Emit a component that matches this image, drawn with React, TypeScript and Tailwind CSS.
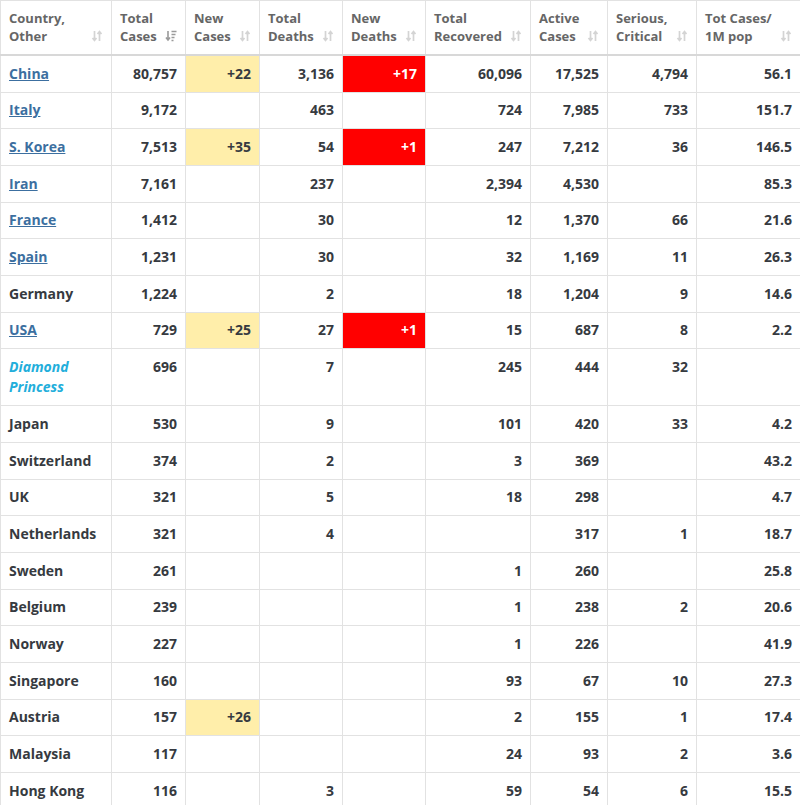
import React from "react";

type Row = {
  name: string;
  kind?: "link" | "ship";
  total: string;
  newCases?: string;
  deaths?: string;
  newDeaths?: string;
  recovered?: string;
  active: string;
  serious?: string;
  perMillion?: string;
};

const rows: Row[] = [
  { name: "China", kind: "link", total: "80,757", newCases: "+22", deaths: "3,136", newDeaths: "+17", recovered: "60,096", active: "17,525", serious: "4,794", perMillion: "56.1" },
  { name: "Italy", kind: "link", total: "9,172", deaths: "463", recovered: "724", active: "7,985", serious: "733", perMillion: "151.7" },
  { name: "S. Korea", kind: "link", total: "7,513", newCases: "+35", deaths: "54", newDeaths: "+1", recovered: "247", active: "7,212", serious: "36", perMillion: "146.5" },
  { name: "Iran", kind: "link", total: "7,161", deaths: "237", recovered: "2,394", active: "4,530", perMillion: "85.3" },
  { name: "France", kind: "link", total: "1,412", deaths: "30", recovered: "12", active: "1,370", serious: "66", perMillion: "21.6" },
  { name: "Spain", kind: "link", total: "1,231", deaths: "30", recovered: "32", active: "1,169", serious: "11", perMillion: "26.3" },
  { name: "Germany", total: "1,224", deaths: "2", recovered: "18", active: "1,204", serious: "9", perMillion: "14.6" },
  { name: "USA", kind: "link", total: "729", newCases: "+25", deaths: "27", newDeaths: "+1", recovered: "15", active: "687", serious: "8", perMillion: "2.2" },
  { name: "Diamond Princess", kind: "ship", total: "696", deaths: "7", recovered: "245", active: "444", serious: "32" },
  { name: "Japan", total: "530", deaths: "9", recovered: "101", active: "420", serious: "33", perMillion: "4.2" },
  { name: "Switzerland", total: "374", deaths: "2", recovered: "3", active: "369", perMillion: "43.2" },
  { name: "UK", total: "321", deaths: "5", recovered: "18", active: "298", perMillion: "4.7" },
  { name: "Netherlands", total: "321", deaths: "4", active: "317", serious: "1", perMillion: "18.7" },
  { name: "Sweden", total: "261", recovered: "1", active: "260", perMillion: "25.8" },
  { name: "Belgium", total: "239", recovered: "1", active: "238", serious: "2", perMillion: "20.6" },
  { name: "Norway", total: "227", recovered: "1", active: "226", perMillion: "41.9" },
  { name: "Singapore", total: "160", recovered: "93", active: "67", serious: "10", perMillion: "27.3" },
  { name: "Austria", total: "157", newCases: "+26", recovered: "2", active: "155", serious: "1", perMillion: "17.4" },
  { name: "Malaysia", total: "117", recovered: "24", active: "93", serious: "2", perMillion: "3.6" },
  { name: "Hong Kong", total: "116", deaths: "3", recovered: "59", active: "54", serious: "6", perMillion: "15.5" },
];

const headers = [
  ["Country,", "Other"],
  ["Total", "Cases"],
  ["New", "Cases"],
  ["Total", "Deaths"],
  ["New", "Deaths"],
  ["Total", "Recovered"],
  ["Active", "Cases"],
  ["Serious,", "Critical"],
  ["Tot Cases/", "1M pop"],
];

const widths = ["w-[111px]", "w-[74px]", "w-[74px]", "w-[83px]", "w-[83px]", "w-[105px]", "w-[77px]", "w-[89px]", "w-[104px]"];

function SortIcon({ active }: { active?: boolean }) {
  if (active) {
    return (
      <svg width="12" height="12" viewBox="0 0 12 12" className="mb-[3px] shrink-0">
        <path d="M3 1v9M1 7.5l2 2.5 2-2.5" stroke="#9a9a9a" strokeWidth="1.6" fill="none" />
        <path d="M6.5 1.5h5M6.5 4.5h4M6.5 7.5h3M6.5 10.5h2" stroke="#9a9a9a" strokeWidth="1.4" />
      </svg>
    );
  }
  return (
    <svg width="12" height="12" viewBox="0 0 12 12" className="mb-[3px] shrink-0">
      <path d="M3.5 1v9.5M1.5 8l2 2.5 2-2.5" stroke="#d4d4d4" strokeWidth="1.7" fill="none" />
      <path d="M8.5 11V1.5M6.5 4l2-2.5 2 2.5" stroke="#d4d4d4" strokeWidth="1.7" fill="none" />
    </svg>
  );
}

function Num({ v, bg }: { v?: string; bg?: string }) {
  return (
    <td className={`border border-[#e2e2e2] px-2 py-[7.7px] text-right align-top ${bg ?? ""}`}>{v}</td>
  );
}

export default function App() {
  return (
    <div className="bg-white font-['Open_Sans',sans-serif] text-[14px] leading-[20.3px] font-bold text-[#363a40]">
      <table className="w-[800px] table-fixed border-collapse">
        <colgroup>
          {widths.map((w, i) => (
            <col key={i} className={w} />
          ))}
        </colgroup>
        <thead>
          <tr>
            {headers.map((h, i) => (
              <th
                key={i}
                className="border border-[#e2e2e2] border-b-2 border-b-[#d8d8d8] px-2 pt-2 pb-[9px] text-left align-top text-[13px] leading-[18px] font-bold text-[#666]"
              >
                <div className="flex items-end justify-between gap-1">
                  <div>
                    <div>{h[0]}</div>
                    <div>{h[1]}</div>
                  </div>
                  <SortIcon active={i === 1} />
                </div>
              </th>
            ))}
          </tr>
        </thead>
        <tbody>
          {rows.map((r) => (
            <tr key={r.name}>
              <td className="border border-[#e2e2e2] px-2 py-[7.7px] text-left align-top">
                {r.kind === "link" ? (
                  <a href="#" className="text-[#3c6fa0] underline">{r.name}</a>
                ) : r.kind === "ship" ? (
                  <span className="italic text-[#22aedb]">
                    Diamond
                    <br />
                    Princess
                  </span>
                ) : (
                  r.name
                )}
              </td>
              <Num v={r.total} />
              <Num v={r.newCases} bg={r.newCases ? "bg-[#ffeeaa]" : ""} />
              <Num v={r.deaths} />
              <Num v={r.newDeaths} bg={r.newDeaths ? "bg-[#ff0000] text-white" : ""} />
              <Num v={r.recovered} />
              <Num v={r.active} />
              <Num v={r.serious} />
              <Num v={r.perMillion} />
            </tr>
          ))}
        </tbody>
      </table>
    </div>
  );
}
